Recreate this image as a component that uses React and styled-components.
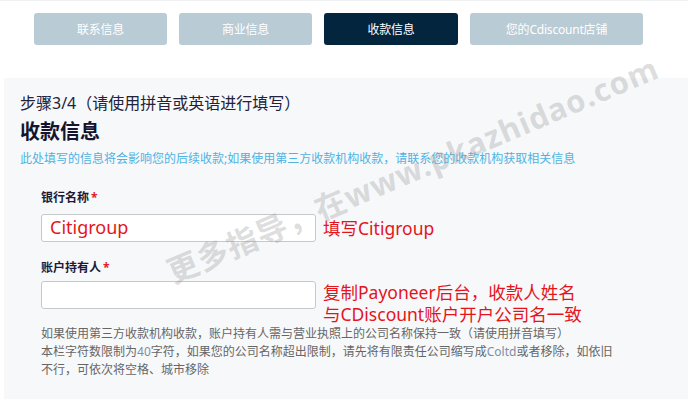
import styled, { createGlobalStyle } from "styled-components";

const GlobalStyle = createGlobalStyle`
  html, body {
    margin: 0;
    padding: 0;
    background: #ffffff;
  }
  body {
    font-family: "Noto Sans", "Noto Sans CJK SC", sans-serif;
  }
  * { box-sizing: border-box; }
`;

const Page = styled.div`
  position: relative;
  width: 688px;
  height: 400px;
  overflow: hidden;
  border-top: 1px solid #eef0f2;
`;

const Steps = styled.div`
  display: flex;
  gap: 12px;
  padding: 12px 0 33px 34px;
`;

const StepButton = styled.div`
  width: ${props => props.width}px;
  height: 32px;
  border-radius: 3px;
  background: ${props => (props.active ? "#03253e" : "#b9cbd4")};
  color: #ffffff;
  font-size: 12px;
  display: flex;
  align-items: center;
  justify-content: center;
  letter-spacing: -0.2px;
`;

const Panel = styled.div`
  margin-left: 4px;
  height: 321px;
  background: #f7f8fa;
  padding: 14px 0 0 16px;
`;

const StepTitle = styled.div`
  font-size: 16px;
  line-height: 22px;
  color: #22223a;
`;

const Title = styled.h2`
  margin: 5px 0 0;
  font-size: 20px;
  line-height: 26px;
  font-weight: 700;
  color: #14142e;
`;

const Notice = styled.div`
  margin-top: 6px;
  font-size: 12px;
  line-height: 16px;
  color: #4fb3e2;
`;

const Form = styled.div`
  padding-left: 21px;
`;

const Label = styled.div`
  margin-top: ${props => props.top}px;
  font-size: 12px;
  line-height: 16px;
  font-weight: 700;
  color: #1a1a38;
`;

const Required = styled.span`
  color: #e0202a;
  margin-left: 2px;
`;

const FieldRow = styled.div`
  display: flex;
  align-items: flex-start;
  gap: 7px;
  margin-top: ${props => props.top}px;
`;

const Input = styled.div`
  width: 275px;
  height: 28px;
  flex-shrink: 0;
  background: #ffffff;
  border: 1px solid #c6c9cc;
  border-radius: 3px;
  padding-left: 8px;
  font-size: 18px;
  line-height: 25px;
  color: #e3171c;
`;

const Note = styled.div`
  font-size: 17.5px;
  line-height: ${props => props.lh}px;
  color: #e5141c;
  white-space: nowrap;
`;

const Help = styled.div`
  font-size: 12px;
  line-height: 18px;
  color: #666666;
`;

const Num = styled.span`
  color: #7d8fa3;
`;

const Watermark = styled.div`
  position: absolute;
  left: 412px;
  top: 167px;
  transform: translate(-50%, -50%) rotate(-23deg);
  font-size: 31px;
  font-weight: 700;
  color: rgba(150, 150, 150, 0.32);
  white-space: nowrap;
  pointer-events: none;
  letter-spacing: 1px;
`;

const steps = [
  { label: "联系信息", width: 133 },
  { label: "商业信息", width: 133 },
  { label: "收款信息", width: 134, active: true },
  { label: "您的Cdiscount店铺", width: 173 },
];

export default function App() {
  return (
    <Page>
      <GlobalStyle />
      <Steps>
        {steps.map(s => (
          <StepButton key={s.label} width={s.width} active={s.active}>
            {s.label}
          </StepButton>
        ))}
      </Steps>
      <Panel>
        <StepTitle>步骤3/4（请使用拼音或英语进行填写）</StepTitle>
        <Title>收款信息</Title>
        <Notice>
          此处填写的信息将会影响您的后续收款;如果使用第三方收款机构收款，请联系您的收款机构获取相关信息
        </Notice>
        <Form>
          <Label top={23}>
            银行名称<Required>*</Required>
          </Label>
          <FieldRow top={8}>
            <Input>Citigroup</Input>
            <Note lh={29}>填写Citigroup</Note>
          </FieldRow>
          <Label top={17}>
            账户持有人<Required>*</Required>
          </Label>
          <FieldRow top={5}>
            <Input />
            <Note lh={22}>
              复制Payoneer后台，收款人姓名
              <br />
              与CDiscount账户开户公司名一致
            </Note>
          </FieldRow>
          <Help>
            如果使用第三方收款机构收款，账户持有人需与营业执照上的公司名称保持一致（请使用拼音填写）
            <br />
            本栏字符数限制为<Num>40</Num>字符，如果您的公司名称超出限制，请先将有限责任公司缩写成<Num>Coltd</Num>或者移除，如依旧
            <br />
            不行，可依次将空格、城市移除
          </Help>
        </Form>
      </Panel>
      <Watermark>更多指导，在www.pkazhidao.com</Watermark>
    </Page>
  );
}
